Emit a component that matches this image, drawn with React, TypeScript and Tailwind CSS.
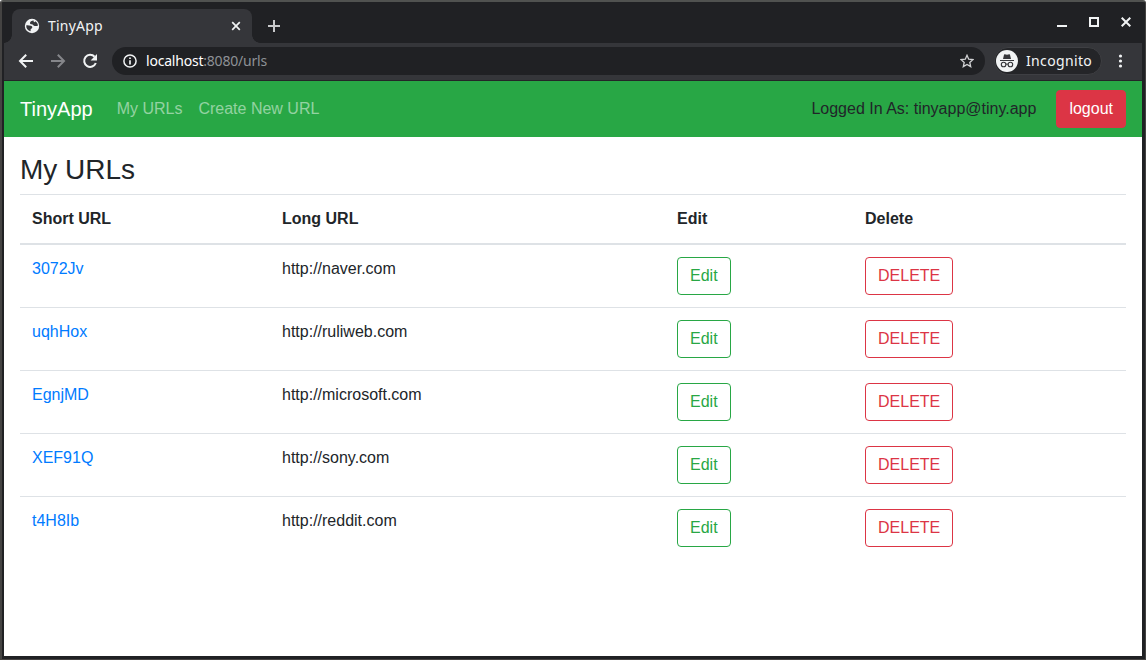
import React from "react";

const urls = [
  ["3072Jv", "http://naver.com"],
  ["uqhHox", "http://ruliweb.com"],
  ["EgnjMD", "http://microsoft.com"],
  ["XEF91Q", "http://sony.com"],
  ["t4H8Ib", "http://reddit.com"],
];

function TabStrip() {
  return (
    <div className="flex h-[41px] items-end pl-[8px]">
      <div className="relative flex h-[34px] w-[240px] items-center rounded-t-[8px] bg-[#35363a] pl-[12px] pr-[10px]">
        <span className="absolute -left-[8px] bottom-0 size-[8px] bg-[radial-gradient(circle_at_0_0,transparent_7.5px,#35363a_8px)]" />
        <span className="absolute -right-[8px] bottom-0 size-[8px] bg-[radial-gradient(circle_at_100%_0,transparent_7.5px,#35363a_8px)]" />
        <svg className="size-[16px]" viewBox="0 0 16 16" fill="none">
          <circle cx="8" cy="8" r="7.2" fill="#f1f3f4" />
          <path d="M9.6 2.6C7.6 2.6 6 3.6 6 4.9c0 1 .8 1.3 1.9 1.4 1 .1 1.2.9 2 1.4.9.5 2.5.5 4 .1.2-2.3-1.3-3.9-2.8-4.6-.1.9-.7 1.2-1.3.9zM2.2 7.4c1.3-.2 3.3 0 4.5.4 1.3.4 1.8 1 1.5 2-.2.7-1 .7-1.4 1.3-.4.6 0 1.2-.2 2.2C3.800 12.600 2.200 10.500 2.200 7.400z" fill="#35363a" />
        </svg>
        <span className="mb-[2px] ml-[8px] font-['Noto_Sans',sans-serif] text-[14px] tracking-[0.2px] text-[#f1f3f4]">TinyApp</span>
        <svg className="ml-auto size-[12px]" viewBox="0 0 12 12" stroke="#f1f3f4" strokeWidth="1.7"><path d="m2.2 2.2 7.6 7.6m0-7.6L2.2 9.8" /></svg>
      </div>
      <svg className="mb-[11px] ml-[16px] size-[12px]" viewBox="0 0 12 12" stroke="#c8c9cb" strokeWidth="2"><path d="M6 0v12M0 6h12" /></svg>
      <div className="mb-[16px] ml-auto mr-[11px] flex items-center gap-[22px]">
        <svg className="size-[10px]" viewBox="0 0 10 10"><path d="M0 8h10v2H0z" fill="#f1f3f4" /></svg>
        <svg className="size-[10px]" viewBox="0 0 10 10" fill="none" stroke="#f1f3f4" strokeWidth="2"><path d="M1 1h8v8H1z" /></svg>
        <svg className="size-[10px]" viewBox="0 0 10 10" stroke="#f1f3f4" strokeWidth="2"><path d="m.7.7 8.6 8.6m0-8.6L.7 9.3" /></svg>
      </div>
    </div>
  );
}

function Toolbar() {
  return (
    <div className="flex h-[38px] items-center border-b border-[#242528] bg-[#35363a] pb-[1px] pl-[14px] pr-[14px]">
      <svg className="size-[16px]" viewBox="0 0 16 16" fill="none" stroke="#f1f3f4" strokeWidth="2"><path d="M15 8H2.2M8.2 1.8 2 8l6.2 6.2" /></svg>
      <svg className="ml-[16px] size-[16px]" viewBox="0 0 16 16" fill="none" stroke="#85868a" strokeWidth="2"><path d="M1 8h12.8M7.8 1.8 14 8l-6.2 6.2" /></svg>
      <svg className="ml-[16px] size-[16px]" viewBox="0 0 16 16" fill="none"><path d="M12.6 3.8A6 6 0 1 0 13.8 10" stroke="#f1f3f4" strokeWidth="2" /><path d="M15 1v6.4H8.6z" fill="#f1f3f4" /></svg>
      <div className="ml-[14px] flex h-[28px] w-[873px] items-center rounded-full bg-[#202124] pl-[11px] pr-[11px]">
        <svg className="size-[14px]" viewBox="0 0 14 14" fill="none"><circle cx="7" cy="7" r="6.1" stroke="#f1f3f4" strokeWidth="1.5" /><path d="M7 6.2v4.3M7 3.5v1.6" stroke="#f1f3f4" strokeWidth="1.7" /></svg>
        <span className="mb-[2px] ml-[9px] font-['Noto_Sans',sans-serif] text-[14px] tracking-[-0.21px] text-[#8e9196]"><span className="text-white">localhost</span>:8080/urls</span>
        <svg className="ml-auto size-[14px]" viewBox="0 0 14 14" fill="none" stroke="#d0d1d3" strokeWidth="1.3"><path d="m7 1.3 1.7 3.9 4.3.4-3.2 2.8.9 4.2L7 10.4l-3.7 2.2.9-4.2L1 5.6l4.3-.4z" /></svg>
      </div>
      <div className="ml-[9px] flex h-[28px] w-[108px] items-center rounded-full border border-[#3e3f43] bg-[#242528] pl-[1px]">
        <svg className="size-[22px] shrink-0" viewBox="0 0 22 22" fill="none">
          <circle cx="11" cy="11" r="11" fill="#f1f3f4" />
          <path d="m7 9 1-4.3c.1-.4.4-.6.8-.5L11 4.7l2.2-.5c.4-.1.7.1.8.5L15 9zM4 10h14v1H4z" fill="#35363a" />
          <circle cx="7.6" cy="14.5" r="2.3" stroke="#35363a" strokeWidth="1.1" />
          <circle cx="14.4" cy="14.5" r="2.3" stroke="#35363a" strokeWidth="1.1" />
          <path d="M9.8 14.4q1.2-.8 2.4 0" stroke="#35363a" strokeWidth="1.1" />
        </svg>
        <span className="mb-[2px] ml-[8px] font-['Noto_Sans',sans-serif] text-[14px] tracking-[0.35px] text-[#f1f3f4]">Incognito</span>
      </div>
      <svg className="ml-auto h-[14px] w-[15px]" viewBox="0 0 15 14" fill="#f1f3f4"><circle cx="7.5" cy="2" r="1.6" /><circle cx="7.5" cy="7" r="1.6" /><circle cx="7.5" cy="12" r="1.6" /></svg>
    </div>
  );
}

function Navbar() {
  return (
    <nav className="flex h-[56px] items-center bg-[#28a745] px-4">
      <a className="text-[20px] leading-[30px] text-white">TinyApp</a>
      <a className="ml-6 text-white/50">My URLs</a>
      <a className="ml-4 text-white/50">Create New URL</a>
      <span className="ml-auto">Logged In As: tinyapp@tiny.app</span>
      <button className="ml-5 h-[38px] rounded border border-[#dc3545] bg-[#dc3545] px-3 text-white">logout</button>
    </nav>
  );
}

export default function App() {
  return (
    <div className="h-[660px] w-[1146px] bg-white">
      <div className="flex h-full flex-col overflow-hidden rounded-t-[3px] border-b border-l-2 border-r border-t-2 border-b-[#464342] border-l-[#444342] border-r-[#444342] border-t-[#505250] bg-[#202124] pb-[3px] pl-[2px] pr-[3px]">
        <TabStrip />
        <Toolbar />
        <div className="flex-1 bg-white font-['Liberation_Sans',Arial,sans-serif] text-[16px] leading-6 text-[#212529]">
          <Navbar />
          <main className="px-4 pt-4">
            <h3 className="mb-2 text-[28px] font-normal leading-[33px]">My URLs</h3>
            <table className="w-full table-fixed border-separate border-spacing-0 text-left">
              <colgroup>
                <col className="w-[250px]" />
                <col className="w-[395px]" />
                <col className="w-[188px]" />
                <col />
              </colgroup>
              <thead>
                <tr>
                  {["Short URL", "Long URL", "Edit", "Delete"].map((t) => (
                    <th key={t} className="border-b-2 border-t border-[#dee2e6] p-3 font-bold">{t}</th>
                  ))}
                </tr>
              </thead>
              <tbody className="[&>tr:not(:first-child)>td]:border-t">
                {urls.map(([id, url]) => (
                  <tr key={id} className="[&>td]:border-[#dee2e6] [&>td]:p-3 [&>td]:align-top">
                    <td><a className="text-[#007bff]">{id}</a></td>
                    <td>{url}</td>
                    <td><button className="block h-[38px] rounded border border-[#28a745] px-3 text-[#28a745]">Edit</button></td>
                    <td><button className="block h-[38px] rounded border border-[#dc3545] px-3 text-[#dc3545]">DELETE</button></td>
                  </tr>
                ))}
              </tbody>
            </table>
          </main>
        </div>
      </div>
    </div>
  );
}
